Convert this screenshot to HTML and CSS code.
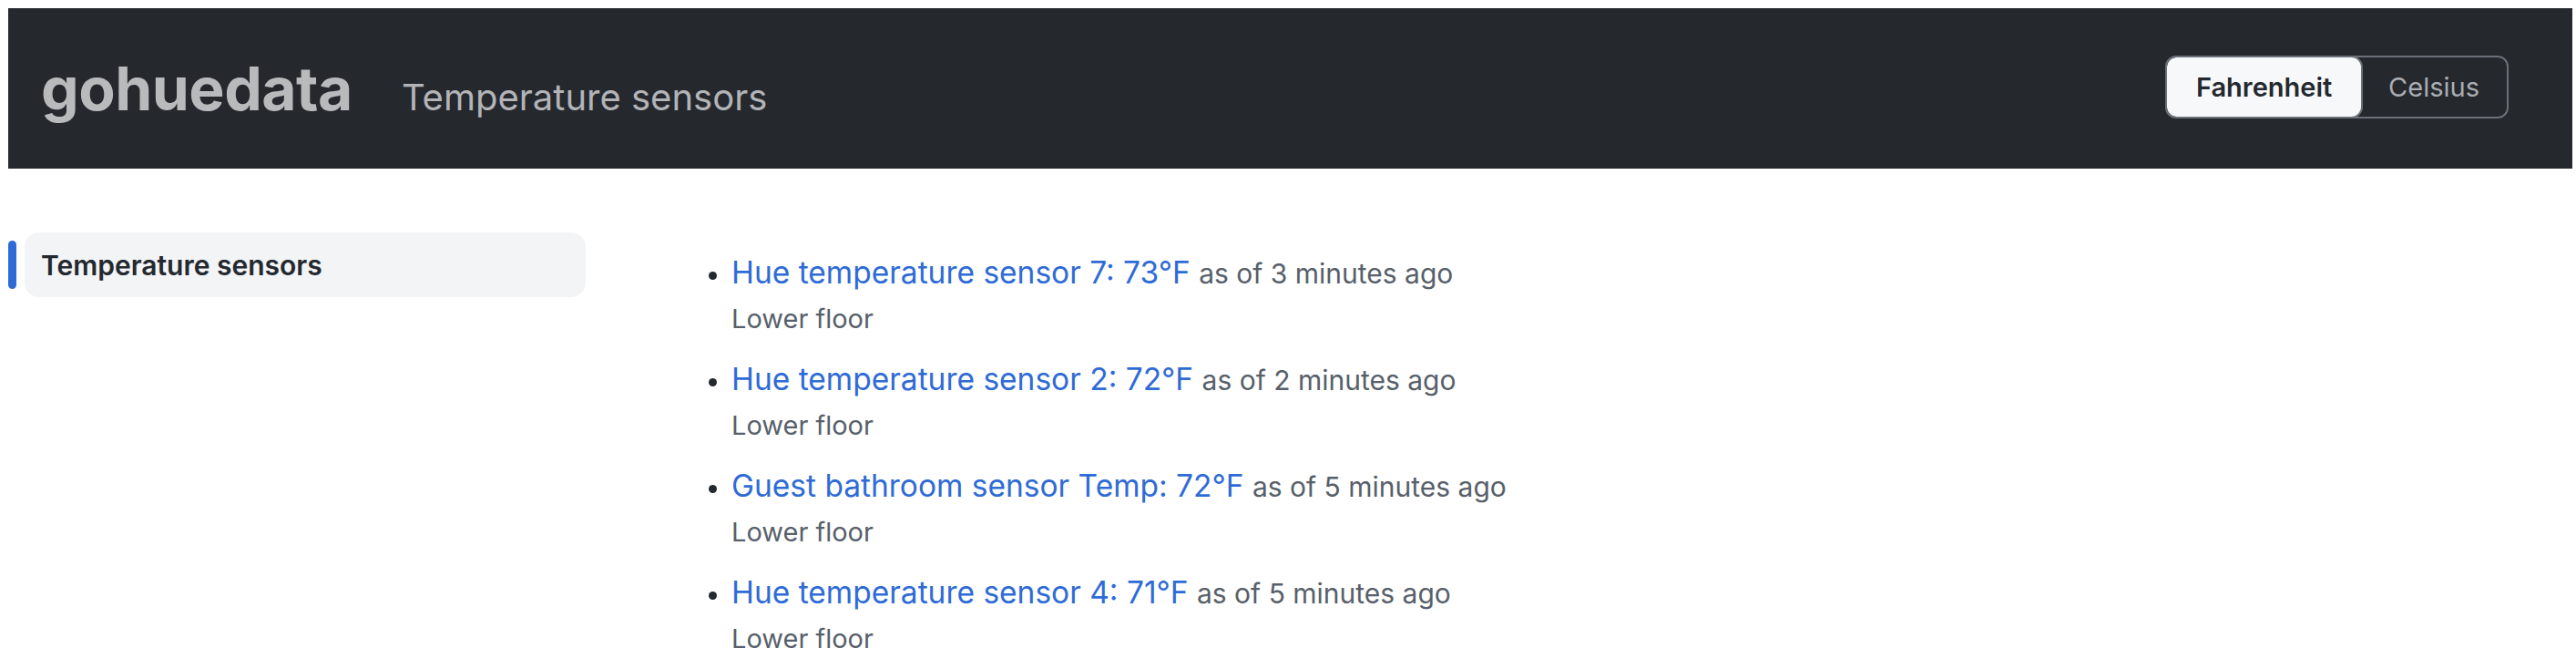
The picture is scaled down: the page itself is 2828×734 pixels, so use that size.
FILE: index.html
```html
<!DOCTYPE html>
<html lang="en">
<head>
<meta charset="utf-8">
<title>gohuedata - Temperature sensors</title>
<link rel="stylesheet" href="styles.css">
</head>
<body>
<header class="header">
  <div class="brand">
    <span class="logo">gohuedata</span>
    <span class="subtitle">Temperature sensors</span>
  </div>
  <div class="toggle">
    <button class="seg seg-active">Fahrenheit</button>
    <button class="seg">Celsius</button>
  </div>
</header>
<div class="layout">
  <nav class="sidebar">
    <div class="nav-item">
      <span class="nav-bar"></span>
      <span class="nav-label">Temperature sensors</span>
    </div>
  </nav>
  <main class="main">
    <ul class="sensors">
      <li class="sensor">
        <div class="line"><a class="name" href="#">Hue temperature sensor 7: 73°F</a> <span class="age">as of 3 minutes ago</span></div>
        <div class="loc">Lower floor</div>
      </li>
      <li class="sensor">
        <div class="line"><a class="name" href="#">Hue temperature sensor 2: 72°F</a> <span class="age">as of 2 minutes ago</span></div>
        <div class="loc">Lower floor</div>
      </li>
      <li class="sensor">
        <div class="line"><a class="name" href="#">Guest bathroom sensor Temp: 72°F</a> <span class="age">as of 5 minutes ago</span></div>
        <div class="loc">Lower floor</div>
      </li>
      <li class="sensor">
        <div class="line"><a class="name" href="#">Hue temperature sensor 4: 71°F</a> <span class="age">as of 5 minutes ago</span></div>
        <div class="loc">Lower floor</div>
      </li>
    </ul>
  </main>
</div>
</body>
</html>
```

FILE: styles.css
```css
* { box-sizing: border-box; }
html, body { background: #ffffff; }
body {
  margin: 9px 4px 0 9px;
  font-family: Inter, "Noto Sans", "Liberation Sans", sans-serif;
  color: #1f2328;
}
.header {
  height: 176px;
  background: #25282d;
  display: flex;
  align-items: center;
  justify-content: space-between;
  padding: 0 70px 0 36px;
}
.brand {
  display: flex;
  align-items: baseline;
  gap: 54px;
}
.logo {
  font-size: 66px;
  font-weight: 700;
  color: #b9babc;
  letter-spacing: -0.5px;
}
.subtitle {
  font-size: 40px;
  font-weight: 400;
  color: #b2b4b8;
}
.toggle {
  display: flex;
  height: 69px;
  border: 2px solid #6b7079;
  border-radius: 12px;
  overflow: hidden;
  margin-top: -4px;
}
.seg {
  font-family: inherit;
  font-size: 29px;
  border: 0;
  background: transparent;
  color: #a9adb3;
  padding: 0 30px;
  margin: 0;
}
.seg-active {
  background: #f6f8fa;
  color: #24292f;
  font-weight: 600;
  border-radius: 11px;
  box-shadow: 0 0 0 2px #6b7079;
  width: 213px;
  padding: 0;
}
.layout {
  display: flex;
  padding-top: 70px;
}
.sidebar {
  width: 722px;
  flex: none;
}
.nav-item {
  display: flex;
  align-items: center;
  gap: 9px;
}
.nav-bar {
  width: 9px;
  height: 53px;
  border-radius: 5px;
  background: #2f6bd6;
}
.nav-label {
  flex: none;
  width: 616px;
  height: 71px;
  background: #f3f4f6;
  border-radius: 16px;
  display: flex;
  align-items: center;
  padding-left: 18px;
  font-size: 30px;
  font-weight: 600;
  color: #24292f;
}
.main { flex: 1; }
.sensors {
  margin: 0;
  padding: 20px 0 0 72px;
  list-style: disc;
}
.sensor {
  margin: 0 0 18px;
  font-size: 29px;
  color: #24292f;
}
.line {
  font-size: 33.5px;
  line-height: 49px;
}
.name {
  color: #2f6bd6;
  text-decoration: none;
}
.age {
  font-size: 30px;
  color: #57606a;
}
.loc {
  font-size: 29px;
  line-height: 49px;
  color: #57606a;
}
```
